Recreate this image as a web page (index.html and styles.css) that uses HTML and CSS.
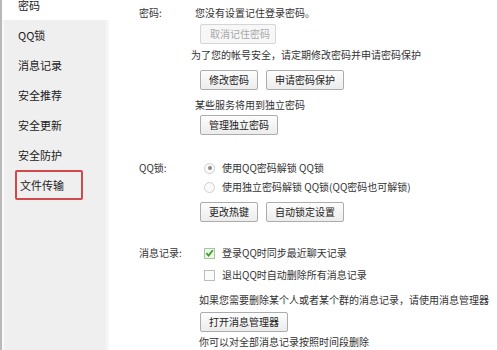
FILE: index.html
```
<!DOCTYPE html>
<html lang="zh-CN">
<head>
<meta charset="utf-8">
<link rel="stylesheet" href="styles.css">
</head>
<body>
<div class="app">
  <nav class="side">
    <ul class="menu">
      <li class="item active">密码</li>
      <li class="item">QQ锁</li>
      <li class="item">消息记录</li>
      <li class="item">安全推荐</li>
      <li class="item">安全更新</li>
      <li class="item">安全防护</li>
      <li class="item marked"><span class="mark">文件传输</span></li>
    </ul>
  </nav>
  <main class="main">
    <section class="sec sec-pwd">
      <div class="label">密码:</div>
      <div class="body">
        <div class="line">您没有设置记住登录密码。</div>
        <div class="btns b1"><span class="btn disabled">取消记住密码</span></div>
        <div class="line l2">为了您的帐号安全，请定期修改密码并申请密码保护</div>
        <div class="btns b2"><span class="btn">修改密码</span><span class="btn">申请密码保护</span></div>
        <div class="line l3">某些服务将用到独立密码</div>
        <div class="btns b3"><span class="btn">管理独立密码</span></div>
      </div>
    </section>
    <section class="sec sec-lock">
      <div class="label">QQ锁:</div>
      <div class="body">
        <div class="opt"><span class="radio on"></span>使用QQ密码解锁 QQ锁</div>
        <div class="opt o2"><span class="radio"></span>使用独立密码解锁 QQ锁(QQ密码也可解锁)</div>
        <div class="btns b4"><span class="btn">更改热键</span><span class="btn">自动锁定设置</span></div>
      </div>
    </section>
    <section class="sec sec-msg">
      <div class="label">消息记录:</div>
      <div class="body">
        <div class="opt"><span class="check on"><svg width="10" height="10" viewBox="0 0 10 10"><path d="M1.5 5.2 L4 7.8 L8.6 2" fill="none" stroke="#3f9b2f" stroke-width="2"/></svg></span>登录QQ时同步最近聊天记录</div>
        <div class="opt o3"><span class="check"></span>退出QQ时自动删除所有消息记录</div>
        <div class="line l4">如果您需要删除某个人或者某个群的消息记录，请使用消息管理器</div>
        <div class="btns b5"><span class="btn">打开消息管理器</span></div>
        <div class="line l5">你可以对全部消息记录按照时间段删除</div>
      </div>
    </section>
  </main>
</div>
</body>
</html>
```
FILE: styles.css
```
html, body {
  margin: 0;
  padding: 0;
  background: #fff;
}
body {
  width: 497px;
  height: 350px;
  overflow: hidden;
  font-family: "Noto Sans CJK SC", "Microsoft YaHei", sans-serif;
  color: #333;
}
.app {
  display: flex;
  height: 350px;
}
.side {
  width: 104px;
  flex: none;
  background: #efefef;
  border-left: 2px solid #b9b9b9;
  box-shadow: inset 2px 0 0 #f9f9f9;
  border-right: 3px solid #f6f6f6;
  overflow: visible;
}
.menu {
  list-style: none;
  margin: -10px 0 0 0;
  padding: 0;
}
.item {
  height: 30px;
  line-height: 30px;
  padding-left: 16px;
  font-size: 11px;
  color: #222;
}
.item.active {
  background: #fff;
  margin-right: -3px;
}
.item.marked {
  padding-left: 13px;
}
.mark {
  display: block;
  box-sizing: border-box;
  width: 68px;
  height: 30px;
  line-height: 26px;
  padding-left: 3px;
  border: 2px solid #d2494c;
  border-radius: 2px;
}
.main {
  flex: 1;
  padding: 5px 0 0 30px;
  font-size: 10px;
}
.sec {
  display: flex;
}
.label {
  width: 56px;
  flex: none;
  line-height: 16px;
  color: #333;
}
.body {
  flex: 1;
}
.line {
  line-height: 16px;
  height: 16px;
  white-space: nowrap;
}
.btns {
  display: flex;
  gap: 8px;
  padding-left: 5px;
}
.btn {
  box-sizing: border-box;
  height: 20px;
  line-height: 18px;
  padding: 0 8px;
  border: 1px solid #acacac;
  border-radius: 2px;
  background: linear-gradient(#fdfdfd, #ececec);
  color: #222;
  white-space: nowrap;
}
.btn.disabled {
  border-color: #d6d6d6;
  background: #f7f7f7;
  color: #a8a8a8;
  padding: 0 5px 0 9px;
}
.b1 { margin-top: 3px; }
.l2 { margin-top: 3px; margin-left: -4px; }
.b2 { margin-top: 7px; }
.l3 { margin-top: 7px; }
.b3 { margin-top: 2px; }
.sec-lock { margin-top: 25px; }
.sec-msg { margin-top: 23px; }
.opt {
  display: flex;
  align-items: center;
  height: 16px;
  line-height: 16px;
  padding-left: 9px;
  white-space: nowrap;
}
.o2 { margin-top: 3px; }
.o3 { margin-top: 6px; }
.b4 { margin-top: 7px; }
.l4 { margin-top: 9px; margin-left: 4px; }
.b5 { margin-top: 4px; }
.l5 { margin-top: 2px; margin-left: 4px; }
.radio {
  box-sizing: border-box;
  width: 11px;
  height: 11px;
  border: 1px solid #cfcfcf;
  border-radius: 50%;
  background: #fafafa;
  margin-right: 7px;
  position: relative;
}
.radio.on::after {
  content: "";
  position: absolute;
  left: 2.5px;
  top: 2.5px;
  width: 4px;
  height: 4px;
  border-radius: 50%;
  background: #8a8a8a;
}
.check {
  box-sizing: border-box;
  width: 11px;
  height: 11px;
  border: 1px solid #bdbdbd;
  background: #fbfbfb;
  margin-right: 7px;
  display: flex;
  align-items: center;
  justify-content: center;
}
.check.on {
  background: #eef6e8;
  border-color: #a6c79a;
}
```
